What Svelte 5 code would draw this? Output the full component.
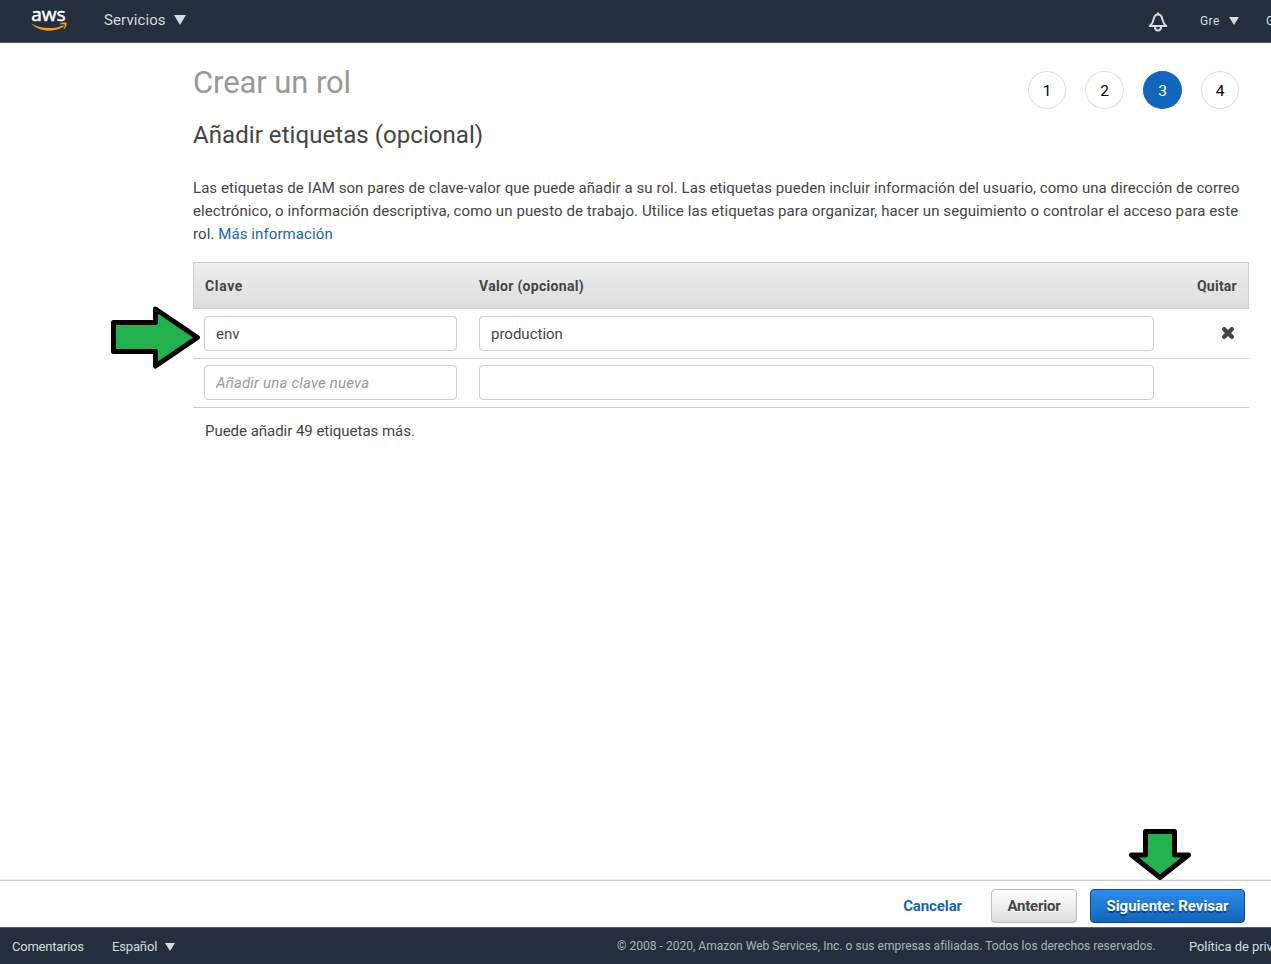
<script>
  const steps = [1, 2, 3, 4];
  const current = 3;
  const rows = [
    { key: 'env', value: 'production', removable: true },
    { key: '', value: '', removable: false }
  ];
</script>

<div class="page">
  <header>
    <svg class="logo" width="38" height="26" viewBox="0 0 38 26" aria-label="aws">
      <text x="1.2" y="12.7" textLength="34.5" lengthAdjust="spacingAndGlyphs">aws</text>
      <path d="M0.7 15.2C10 24.6 25 24.6 34 18.6L33.2 17.4C24 21.2 11 21.2 0.7 15.2Z" fill="#f79a1c" />
      <path d="M30 15.7C32 14.4 35 14.4 36.4 15.1C36.7 17 35.6 19.6 33.9 21.2C34.5 19.4 35.2 17.4 34.8 16.6C34.1 15.9 32 16 30 16.2Z" fill="#f79a1c" stroke="#f79a1c" stroke-width="0.5" />
    </svg>
    <span class="services">Servicios</span>
    <svg class="caret big" width="12" height="10" viewBox="0 0 12 10"><path d="M0 0H12L6 10Z" /></svg>
    <svg class="bell" width="20" height="20" viewBox="0 0 20 20" fill="none" stroke="#d5dbdb" stroke-width="2">
      <path d="M1.7 14C5 11.3 5.2 9.5 5.6 7.3C6.2 4.3 7.8 2.6 10 2.6C12.2 2.6 13.8 4.3 14.4 7.3C14.8 9.5 15 11.3 18.3 14Z" stroke-linejoin="round" />
      <path d="M10 3V0.6M7 15C7 19.6 13 19.6 13 15" />
    </svg>
    <span class="account">Gre</span>
    <svg class="caret small" width="10" height="8" viewBox="0 0 10 8"><path d="M0 0H10L5 8Z" /></svg>
    <span class="region">Global</span>
  </header>

  <main>
    <div class="top">
      <div>
        <h1>Crear un rol</h1>
        <h2>Añadir etiquetas (opcional)</h2>
      </div>
      <ol>
        {#each steps as step}
          <li class:active={step === current}>{step}</li>
        {/each}
      </ol>
    </div>

    <p class="intro">
      <span class="l1">Las etiquetas de IAM son pares de clave-valor que puede añadir a su rol. Las etiquetas pueden incluir información del usuario, como una dirección de correo</span>
      <span class="l2">electrónico, o información descriptiva, como un puesto de trabajo. Utilice las etiquetas para organizar, hacer un seguimiento o controlar el acceso para este</span>
      <span class="l2">rol. <a href="#info">Más información</a></span>
    </p>

    <div class="table">
      <div class="row head">
        <span class="h-key">Clave</span><span class="h-value">Valor (opcional)</span><span class="remove h-remove">Quitar</span>
      </div>
      {#each rows as row}
        <div class="row">
          <input class="key" value={row.key} placeholder="Añadir una clave nueva" />
          <input class="value" value={row.value} />
          <span class="remove">
            {#if row.removable}
              <svg width="14" height="14" viewBox="0 0 14 14"><path d="M3.2 3.2L10.8 10.8M10.8 3.2L3.2 10.8" stroke="#444" stroke-width="4.4" stroke-linecap="round" /></svg>
            {/if}
          </span>
        </div>
      {/each}
    </div>
    <p class="remaining">Puede añadir 49 etiquetas más.</p>
  </main>

  <div class="actions">
    <a class="cancel" href="#cancel">Cancelar</a>
    <button class="prev"><span>Anterior</span></button>
    <button class="next"><span>Siguiente: Revisar</span></button>
  </div>

  <footer>
    <span class="feedback">Comentarios</span>
    <span class="language">Español</span>
    <svg class="caret" width="10" height="8" viewBox="0 0 10 8"><path d="M0 0H10L5 8Z" /></svg>
    <span class="copyright">© 2008 - 2020, Amazon Web Services, Inc. o sus empresas afiliadas. Todos los derechos reservados.</span>
    <span class="privacy">Política de privacidad</span>
  </footer>

  <svg class="arrow right" width="92" height="66" viewBox="0 0 92 66"><path d="M4.5 18.5H46.5V5L88.5 33.5L46.5 62V47.5H4.5Z" /></svg>
  <svg class="arrow down" width="64" height="54" viewBox="0 0 64 54"><path d="M17.5 4.5H46.5V28H60.5L32 50.5L3.5 28H17.5Z" /></svg>
</div>

<style>
  :global(body) { margin: 0; background: #fff; }
  .page {
    position: relative; width: 100%; height: 964px; overflow: hidden;
    display: flex; flex-direction: column;
    font-family: Roboto, "Liberation Sans", sans-serif; font-size: 15px; color: #444;
  }
  .page, .page * { box-sizing: border-box; }
  span, a { white-space: nowrap; flex: none; }
  a { color: #1166bb; text-decoration: none; }
  svg { display: block; flex: none; }
  header {
    height: 43px; flex: none; display: flex; align-items: center; padding: 0 0 3px 30px;
    background: #232f3e; border-bottom: 1px solid #555f6b; color: #d5dbdb;
  }
  .logo { margin-top: 2px; overflow: visible; }
  .logo text { font: 400 19px "Open Sans", sans-serif; fill: #fff; stroke: #fff; stroke-width: 0.5px; }
  .services { width: 63px; margin-left: 36px; letter-spacing: 0.1px; }
  .caret { fill: #d5dbdb; }
  .big { margin-left: 7px; }
  .bell { margin: 4px 0 0 962px; }
  .account { width: 20px; margin-left: 32px; font-size: 12px; letter-spacing: 0.4px; padding-top: 2px; }
  .small { margin: 3px 0 0 9px; }
  .region { margin-left: 27px; font-size: 12px; padding-top: 2px; }
  main { flex: 1; padding: 20px 22px 0 193px; }
  .top { display: flex; justify-content: space-between; }
  h1, h2, p, ol { margin: 0; padding: 0; font-weight: 400; }
  h1 { font-size: 31px; line-height: 38px; padding-top: 1px; letter-spacing: -0.1px; color: #999; }
  h2 { font-size: 24px; line-height: 30px; margin-top: 18px; letter-spacing: 0.06px; }
  ol { display: flex; gap: 19px; list-style: none; padding: 8px 10px 0 0; }
  li {
    width: 38px; height: 38px; border: 1px solid #ddd; border-radius: 50%; padding-top: 1px;
    display: flex; align-items: center; justify-content: center; color: #000; font-size: 15.5px;
  }
  li:nth-child(2), li:nth-child(3) { width: 39px; }
  .active { background: #1166bb; border-color: #1166bb; color: #fff; }
  .intro { margin-top: 27px; line-height: 23px; }
  .intro > span { display: block; }
  .l1 { letter-spacing: 0.06px; }
  .l2 { letter-spacing: 0.09px; }
  .table { margin-top: 16px; }
  .row { display: flex; align-items: center; height: 49px; padding: 0 0 1px 11px; border-bottom: 1px solid #ccc; }
  .row:nth-child(2) { height: 50px; padding-bottom: 0; }
  .head { height: 47px; padding-bottom: 0; border: 1px solid #ccc; background: linear-gradient(#eee, #ddd); font-weight: 700; font-size: 14px; }
  .h-key { width: 274px; letter-spacing: 0.65px; }
  .h-value { letter-spacing: 0.31px; }
  input {
    height: 35px; border: 1px solid #ccc; border-radius: 4px; padding: 0 11px;
    font: 15px Roboto, "Liberation Sans", sans-serif; color: #444; background: #fff;
  }
  input::placeholder { color: #999; font-style: italic; opacity: 1; letter-spacing: 0.18px; }
  .key { width: 253px; margin-right: 22px; }
  .value { width: 675px; }
  .remove { margin-left: auto; margin-right: 14px; }
  .remove svg { margin-top: -2px; }
  .h-remove { margin-right: 11px; letter-spacing: 0.25px; }
  .remaining { padding: 12px 0 0 12px; line-height: 23px; letter-spacing: -0.03px; }
  .actions {
    height: 47px; flex: none; display: flex; align-items: center; justify-content: flex-end;
    padding: 4px 26px 0 0; border-top: 1px solid #ccc; box-shadow: 0 -1px 0 #eee; font-weight: 700;
  }
  .cancel { letter-spacing: -0.1px; }
  button {
    height: 34px; border-radius: 4px; padding: 0; font: 700 15px Roboto, "Liberation Sans", sans-serif;
  }
  .prev { width: 86px; margin: 0 13px 0 29px; color: #444; letter-spacing: -0.2px; border: 1px solid #bbb; background: linear-gradient(#fff, #ddd); text-shadow: 0 1px 0 #fff; }
  .next { width: 155px; color: #fff; border: 1px solid #0f4a85; background: linear-gradient(#2d8cef, #1166bb); text-shadow: 0 2px 1px rgba(0, 0, 0, 0.45); }
  footer {
    height: 37px; flex: none; display: flex; align-items: center; padding: 1px 0 0 12px;
    background: #232f3e; border-top: 1px solid #555f6b; color: #d5dbdb; font-size: 13px;
  }
  .feedback { width: 100px; letter-spacing: -0.24px; }
  .language { width: 46px; letter-spacing: -0.15px; }
  footer .caret { margin-left: 7px; }
  .copyright { width: 572px; margin: -1px 0 0 442px; font-size: 12px; letter-spacing: 0.025px; color: #aab7b8; }
  .privacy { letter-spacing: -0.08px; }
  .arrow { position: absolute; }
  .arrow path { fill: #22b14c; stroke: #000; stroke-width: 5; stroke-linejoin: round; }
  .right { left: 109px; top: 304px; }
  .down { left: 1128px; top: 827px; }
</style>
